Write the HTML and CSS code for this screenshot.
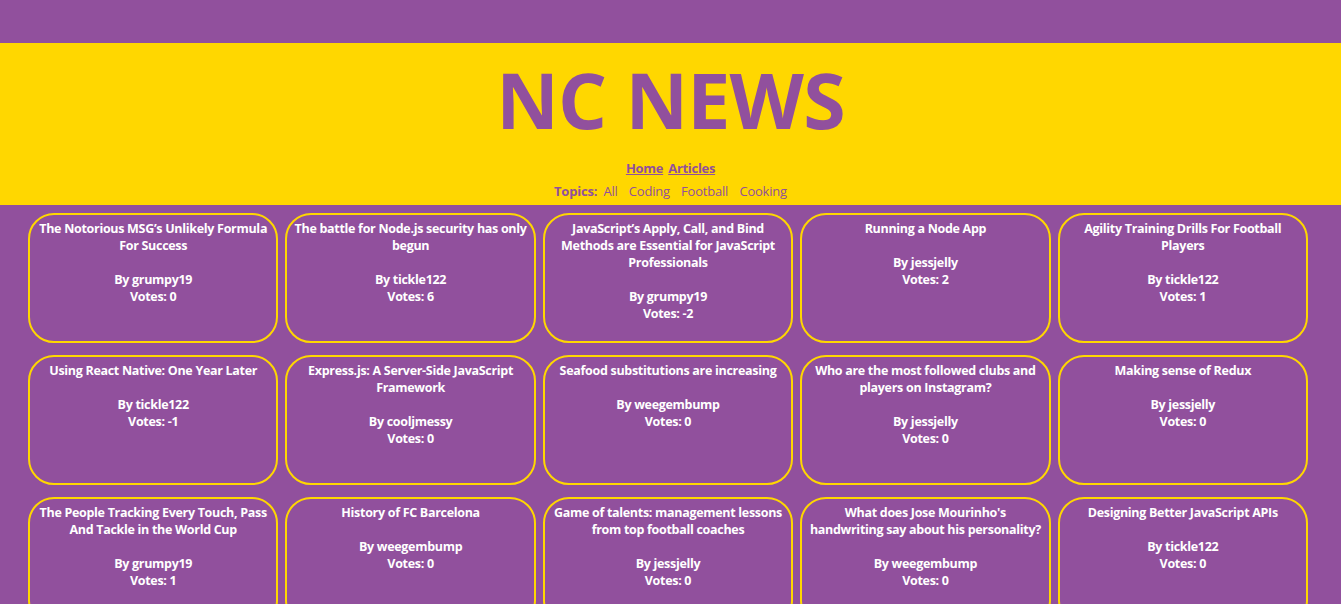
FILE: index.html
```html
<!DOCTYPE html>
<html>
<head>
<meta charset="utf-8">
<link rel="stylesheet" href="styles.css">
</head>
<body>
<div class="topband"></div>
<header class="header">
  <h1 class="title">NC NEWS</h1>
  <nav class="nav"><a href="#">Home</a> <a href="#">Articles</a></nav>
  <div class="topics"><span class="topics-label">Topics:</span> <a href="#">All</a> <a href="#">Coding</a> <a href="#">Football</a> <a href="#">Cooking</a></div>
</header>
<main class="grid">
  <div class="card"><h3>The Notorious MSG’s Unlikely Formula For Success</h3><p>By grumpy19<br>Votes: 0</p></div>
  <div class="card"><h3>The battle for Node.js security has only begun</h3><p>By tickle122<br>Votes: 6</p></div>
  <div class="card"><h3>JavaScript’s Apply, Call, and Bind Methods are Essential for JavaScript Professionals</h3><p>By grumpy19<br>Votes: -2</p></div>
  <div class="card"><h3>Running a Node App</h3><p>By jessjelly<br>Votes: 2</p></div>
  <div class="card"><h3>Agility Training Drills For Football Players</h3><p>By tickle122<br>Votes: 1</p></div>
  <div class="card"><h3>Using React Native: One Year Later</h3><p>By tickle122<br>Votes: -1</p></div>
  <div class="card"><h3>Express.js: A Server-Side JavaScript Framework</h3><p>By cooljmessy<br>Votes: 0</p></div>
  <div class="card"><h3>Seafood substitutions are increasing</h3><p>By weegembump<br>Votes: 0</p></div>
  <div class="card"><h3>Who are the most followed clubs and players on Instagram?</h3><p>By jessjelly<br>Votes: 0</p></div>
  <div class="card"><h3>Making sense of Redux</h3><p>By jessjelly<br>Votes: 0</p></div>
  <div class="card"><h3>The People Tracking Every Touch, Pass And Tackle in the World Cup</h3><p>By grumpy19<br>Votes: 1</p></div>
  <div class="card"><h3>History of FC Barcelona</h3><p>By weegembump<br>Votes: 0</p></div>
  <div class="card"><h3>Game of talents: management lessons from top football coaches</h3><p>By jessjelly<br>Votes: 0</p></div>
  <div class="card"><h3>What does Jose Mourinho's handwriting say about his personality?</h3><p>By weegembump<br>Votes: 0</p></div>
  <div class="card"><h3>Designing Better JavaScript APIs</h3><p>By tickle122<br>Votes: 0</p></div>
</main>
</body>
</html>
```

FILE: styles.css
```css
html, body {
  margin: 0;
  padding: 0;
}
body {
  background: #91509d;
  font-family: "Open Sans", "Noto Sans", sans-serif;
  color: #fff;
}
.topband {
  height: 43px;
}
.header {
  background: #ffd700;
  height: 162px;
  display: flex;
  flex-direction: column;
  align-items: center;
  color: #91509d;
}
.title {
  margin: 5px 0 0 0;
  font-size: 77px;
  line-height: 104px;
  font-weight: 700;
  letter-spacing: -0.8px;
}
.nav {
  margin-top: 7px;
  font-size: 13px;
  line-height: 18px;
  font-weight: 700;
  letter-spacing: -0.3px;
}
.nav a {
  color: #91509d;
  text-decoration: underline;
  margin: 0 1px;
}
.topics {
  margin-top: 5px;
  font-size: 13px;
  line-height: 18px;
  letter-spacing: -0.2px;
}
.topics-label {
  font-weight: 700;
  margin-right: 3px;
}
.topics a {
  color: #91509d;
  text-decoration: none;
  margin-right: 8px;
}
.topics a:last-child {
  margin-right: 0;
}
.grid {
  display: grid;
  grid-template-columns: repeat(5, 1fr);
  column-gap: 7px;
  row-gap: 12px;
  width: 1280px;
  margin: 8px 0 0 28px;
}
.card {
  box-sizing: border-box;
  height: 130px;
  border: 2px solid #ffd700;
  border-radius: 26px;
  padding: 5px 5px;
  text-align: center;
  font-weight: 700;
  font-size: 12.5px;
  line-height: 17px;
  letter-spacing: -0.3px;
}
.card h3 {
  margin: 0;
  font-size: 12.5px;
  line-height: 17px;
}
.card p {
  margin: 17px 0 0 0;
}
```
